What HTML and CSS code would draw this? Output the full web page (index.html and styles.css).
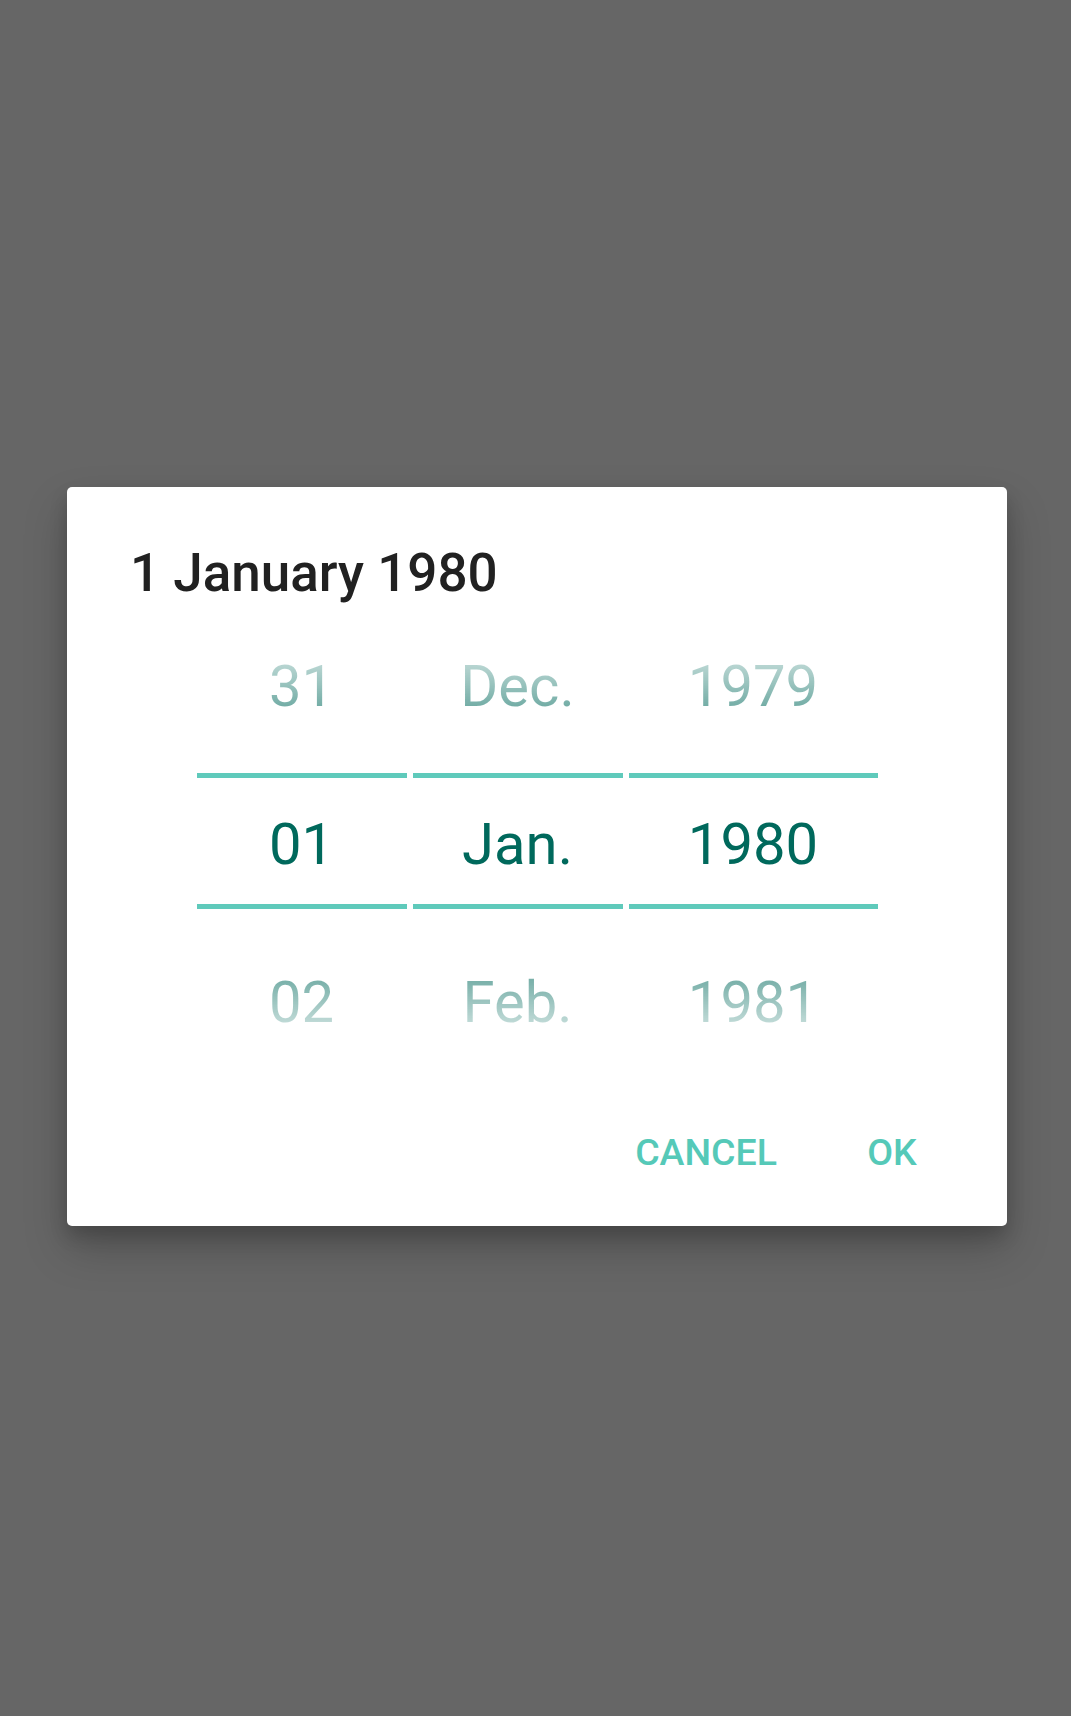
FILE: index.html
```html
<!DOCTYPE html>
<html lang="en">
<head>
<meta charset="utf-8">
<title>Date picker</title>
<link rel="stylesheet" href="styles.css">
</head>
<body>
<div class="scrim">
  <div class="dialog">
    <h1 class="title">1 January 1980</h1>
    <div class="picker">
      <div class="col col-day">
        <div class="row row-prev"><span class="fade fade-top">31</span></div>
        <div class="row row-sel">01</div>
        <div class="row row-next"><span class="fade fade-bottom">02</span></div>
      </div>
      <div class="col col-month">
        <div class="row row-prev"><span class="fade fade-top">Dec.</span></div>
        <div class="row row-sel">Jan.</div>
        <div class="row row-next"><span class="fade fade-bottom">Feb.</span></div>
      </div>
      <div class="col col-year">
        <div class="row row-prev"><span class="fade fade-top">1979</span></div>
        <div class="row row-sel">1980</div>
        <div class="row row-next"><span class="fade fade-bottom">1981</span></div>
      </div>
    </div>
    <div class="actions">
      <button class="btn">CANCEL</button>
      <button class="btn">OK</button>
    </div>
  </div>
</div>
</body>
</html>
```

FILE: styles.css
```css
html, body {
  margin: 0;
  padding: 0;
}

body {
  background: #666666;
  font-family: Roboto, "Noto Sans", "Liberation Sans", sans-serif;
}

.scrim {
  height: 1716px;
  box-sizing: border-box;
  padding: 487px 0 0 67px;
}

.dialog {
  width: 940px;
  height: 739px;
  box-sizing: border-box;
  background: #ffffff;
  border-radius: 5px;
  box-shadow: 0 22px 44px rgba(0, 0, 0, 0.22), 0 10px 18px rgba(0, 0, 0, 0.16);
  padding: 54px 0 0 0;
  display: flex;
  flex-direction: column;
}

.title {
  margin: 0;
  padding-left: 63px;
  font-size: 53px;
  line-height: 64px;
  font-weight: 500;
  color: #212121;
}

.picker {
  display: flex;
  justify-content: center;
  gap: 6px;
  margin-top: -3px;
}

.col {
  display: flex;
  flex-direction: column;
  text-align: center;
  font-size: 58px;
  font-weight: 400;
}

.col-day, .col-month { width: 210px; }
.col-year { width: 249px; }

.row-prev {
  height: 158px;
  line-height: 158px;
  margin-bottom: 13px;
}

.row-sel {
  height: 120px;
  line-height: 120px;
  padding-top: 6px;
  border-top: 5px solid #5fcabb;
  border-bottom: 5px solid #5fcabb;
  color: #00695c;
}

.row-next {
  height: 158px;
  line-height: 158px;
  margin-top: 9px;
}

.fade {
  display: inline-block;
  line-height: 58px;
  vertical-align: middle;
  -webkit-background-clip: text;
  background-clip: text;
  color: transparent;
}

.fade-top {
  background-image: linear-gradient(to bottom, rgba(0, 105, 92, 0.28) 13%, rgba(0, 105, 92, 0.54) 84%);
}

.fade-bottom {
  background-image: linear-gradient(to bottom, rgba(0, 105, 92, 0.52) 13%, rgba(0, 105, 92, 0.26) 84%);
}

.actions {
  display: flex;
  justify-content: flex-end;
  gap: 10px;
  padding-right: 31px;
  margin-top: 28px;
}

.btn {
  min-width: 168px;
  height: 95px;
  padding: 0 21px;
  border: none;
  background: transparent;
  font-family: Roboto, "Noto Sans", "Liberation Sans", sans-serif;
  font-size: 37.5px;
  font-weight: 500;
  color: #55c9b8;
  text-align: center;
}
```
